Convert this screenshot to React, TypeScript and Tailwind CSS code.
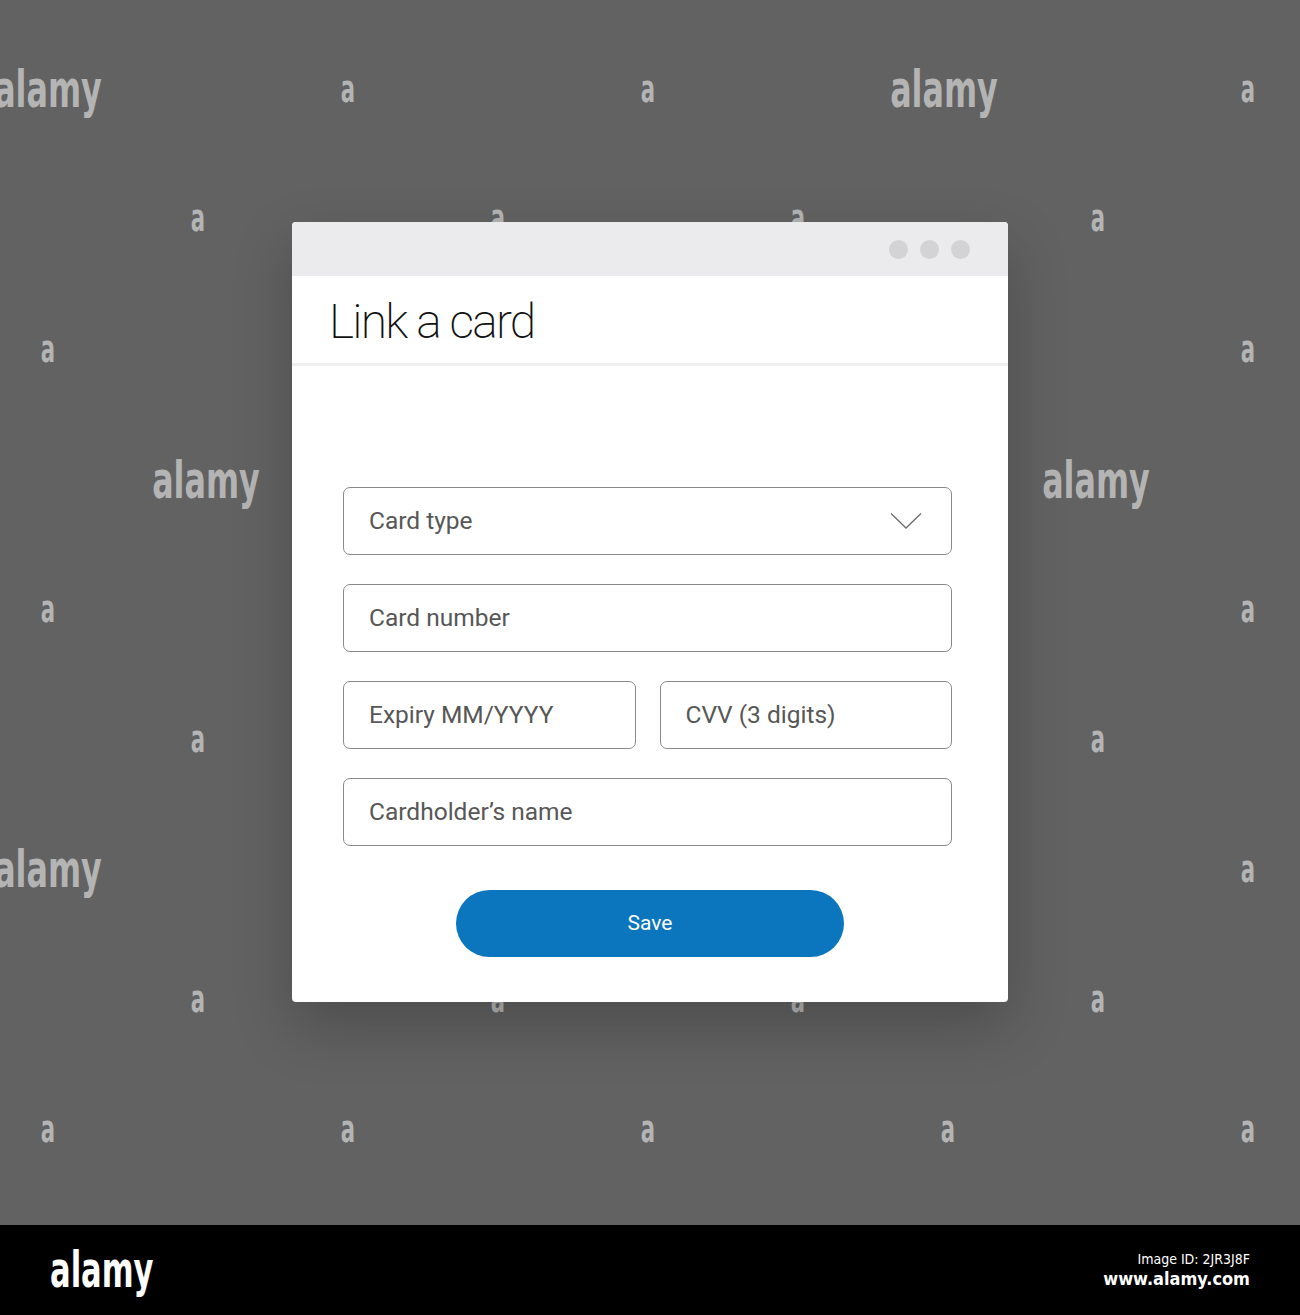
import React from "react";

const bigMarks = [
  [48, 89],
  [944, 89],
  [206, 480],
  [1096, 480],
  [48, 869],
];

const smallMarks = [
  [348, 89], [648, 89], [1248, 89],
  [198, 218], [498, 218], [798, 218], [1098, 218],
  [48, 349], [1248, 349],
  [48, 609], [1248, 609],
  [198, 739], [1098, 739],
  [1248, 869],
  [198, 999], [498, 999], [798, 999], [1098, 999],
  [48, 1129], [348, 1129], [648, 1129], [948, 1129], [1248, 1129],
];

const markFont = { fontFamily: '"DejaVu Sans Condensed", "DejaVu Sans", sans-serif' };

function Field({ label, chevron }: { label: string; chevron?: boolean }) {
  return (
    <div className="flex h-[68px] w-full items-center justify-between rounded-[7px] border border-[#8a8a8a] bg-white pl-[25px] pr-[29px]">
      <span className="text-[24.5px] text-[#575757]">{label}</span>
      {chevron && (
        <svg width="32" height="18" viewBox="0 0 32 18" fill="none">
          <polyline points="1,1.5 16,16 31,1.5" stroke="#6b6b6b" strokeWidth="1.3" />
        </svg>
      )}
    </div>
  );
}

export default function App() {
  return (
    <div className="flex h-[1315px] w-[1300px] flex-col overflow-hidden" style={{ fontFamily: "Roboto, 'Liberation Sans', sans-serif" }}>
      <div className="relative flex h-[1225px] w-full justify-center bg-[#626262] pt-[222px]">
        {/* watermarks */}
        {bigMarks.map(([x, y], i) => (
          <span
            key={"b" + i}
            className="absolute -translate-x-1/2 -translate-y-1/2 scale-x-[0.68] text-[52px] font-bold leading-none text-[#b4b4b4]"
            style={{ left: x, top: y, ...markFont }}
          >
            alamy
          </span>
        ))}
        {smallMarks.map(([x, y], i) => (
          <span
            key={"s" + i}
            className="absolute -translate-x-1/2 -translate-y-1/2 scale-x-[0.62] text-[38px] font-bold leading-none text-[#b4b4b4]"
            style={{ left: x, top: y, ...markFont }}
          >
            a
          </span>
        ))}

        <div className="relative z-10 flex h-[780px] w-[716px] flex-col rounded-[4px] bg-white shadow-[0_24px_60px_rgba(0,0,0,0.22)]">
          <div className="flex h-[54px] items-center justify-end gap-[12px] rounded-t-[4px] bg-[#ebebed] pr-[38px]">
            <span className="h-[19px] w-[19px] rounded-full bg-[#d3d3d5]" />
            <span className="h-[19px] w-[19px] rounded-full bg-[#d3d3d5]" />
            <span className="h-[19px] w-[19px] rounded-full bg-[#d3d3d5]" />
          </div>
          <div className="flex h-[90px] items-center border-b-[3px] border-[#f0f0f0] pl-[37px]">
            <h1 className="mt-[4px] text-[48px] font-extralight tracking-[-1.8px] text-[#111111]">Link a card</h1>
          </div>
          <div className="flex flex-col gap-[29px] pl-[51px] pr-[56px] pt-[121px]">
            <Field label="Card type" chevron />
            <Field label="Card number" />
            <div className="flex gap-[24px]">
              <Field label="Expiry MM/YYYY" />
              <Field label="CVV (3 digits)" />
            </div>
            <Field label="Cardholder’s name" />
          </div>
          <div className="flex justify-center pt-[44px]">
            <button className="h-[67px] w-[388px] rounded-full bg-[#0b76be] text-[21px] font-normal text-white">
              Save
            </button>
          </div>
        </div>
      </div>

      <div className="flex h-[90px] w-full items-center justify-between bg-black pl-[50px] pr-[50px]">
        <span
          className="origin-left scale-x-[0.68] text-[50px] font-bold leading-none text-white"
          style={markFont}
        >
          alamy
        </span>
        <div className="flex flex-col items-end gap-[4px] text-white" style={markFont}>
          <span className="text-[14px] leading-none">Image ID: 2JR3J8F</span>
          <span className="text-[18px] font-bold leading-none">www.alamy.com</span>
        </div>
      </div>
    </div>
  );
}
